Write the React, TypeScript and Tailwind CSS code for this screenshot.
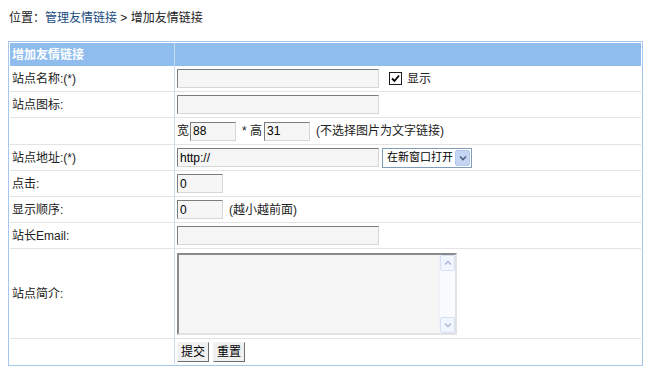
const font = { fontFamily: '"Liberation Sans", "Noto Sans CJK SC", sans-serif' };

function TextBox({ w, value = "" }: { w: string; value?: string }) {
  return (
    <div
      className={`${w} flex h-[19px] shrink-0 items-center border border-t-[#7c7c7c] border-l-[#7c7c7c] border-r-[#d6d6d6] border-b-[#d6d6d6] bg-[#f6f6f6] px-[2px] text-[12px] text-black`}
    >
      {value}
    </div>
  );
}

function Row({
  label,
  h = "h-[26px]",
  children,
}: {
  label: string;
  h?: string;
  children?: React.ReactNode;
}) {
  return (
    <>
      <div className={`${h} flex items-center border-b border-r border-b-[#e4e4e4] border-r-[#c9dcf2] pl-[2px]`}>
        {label}
      </div>
      <div className={`${h} flex items-center gap-[4px] whitespace-nowrap border-b border-[#e4e4e4] pl-[2px]`}>
        {children}
      </div>
    </>
  );
}

const btn =
  "flex h-[20px] items-center border border-t-[#f4f4f4] border-l-[#f4f4f4] border-r-[#6f6f6f] border-b-[#6f6f6f] bg-[#f0f0f0] px-[3px] text-black";

export default function App() {
  return (
    <div className="h-[380px] w-[650px] bg-white text-[12px] text-[#222]" style={font}>
      <div className="pl-[9px] pt-[10px] leading-[16px]">
        位置：<span className="text-[#1a4c80]">管理友情链接</span> &gt; 增加友情链接
      </div>

      <div className="ml-[8px] mt-[15px] w-[635px] border border-[#a6c6ec] p-px">
        <div className="grid grid-cols-[165px_1fr]">
          <div className="flex h-[23px] items-center border-r border-[#c9dcf2] bg-[#8ebdee] pl-[2px] font-bold text-white">
            增加友情链接
          </div>
          <div className="h-[23px] bg-[#8ebdee]" />

          <Row label="站点名称:(*)">
            <TextBox w="w-[202px]" />
            <div className="ml-[6px] flex h-[13px] w-[13px] items-center justify-center border border-[#1c1c1c] bg-white">
              <svg width="9" height="9" viewBox="0 0 9 9">
                <path d="M1 4.5 L3.5 7 L8 1.5" fill="none" stroke="#000" strokeWidth="1.8" />
              </svg>
            </div>
            <span className="ml-[1px]">显示</span>
          </Row>

          <Row label="站点图标:">
            <TextBox w="w-[202px]" />
          </Row>

          <Row label="" h="h-[27px]">
            <span className="mr-[-3px]">宽</span>
            <TextBox w="w-[46px]" value="88" />
            <span className="ml-[2px] mr-[-2px]">* 高</span>
            <TextBox w="w-[46px]" value="31" />
            <span className="ml-[2px]">(不选择图片为文字链接)</span>
          </Row>

          <Row label="站点地址:(*)">
            <TextBox w="w-[202px]" value="http://" />
            <div className="ml-[-1px] flex h-[20px] w-[90px] shrink-0 items-center justify-between border border-[#7f9db9] bg-white pl-[4px] pr-px">
              <span className="whitespace-nowrap text-[11px] text-black">在新窗口打开</span>
              <div className="flex h-[16px] w-[15px] shrink-0 items-center justify-center rounded-[2px] border border-[#b3c8ea] bg-[#c5d6f5]">
                <svg width="8" height="6" viewBox="0 0 8 6">
                  <path d="M1 1.5 L4 4.5 L7 1.5" fill="none" stroke="#4d6185" strokeWidth="1.6" />
                </svg>
              </div>
            </div>
          </Row>

          <Row label="点击:">
            <TextBox w="w-[46px]" value="0" />
          </Row>

          <Row label="显示顺序:">
            <TextBox w="w-[46px]" value="0" />
            <span className="ml-[2px]">(越小越前面)</span>
          </Row>

          <Row label="站长Email:">
            <TextBox w="w-[202px]" />
          </Row>

          <Row label="站点简介:" h="h-[90px]">
            <div className="flex h-[82px] w-[280px] border-2 border-t-[#8a8a8a] border-l-[#8a8a8a] border-r-[#e2e2e2] border-b-[#e2e2e2] bg-[#f6f6f6]">
              <div className="flex-1" />
              <div className="flex w-[16px] flex-col justify-between border-l border-[#eef2fb] bg-[#fafbfe]">
                <div className="flex h-[16px] items-center justify-center rounded-[2px] border border-[#d6e0f4] bg-[#f1f5fd]">
                  <svg width="8" height="6" viewBox="0 0 8 6">
                    <path d="M1 4.5 L4 1.5 L7 4.5" fill="none" stroke="#a9b9d9" strokeWidth="1.5" />
                  </svg>
                </div>
                <div className="flex h-[16px] items-center justify-center rounded-[2px] border border-[#d6e0f4] bg-[#f1f5fd]">
                  <svg width="8" height="6" viewBox="0 0 8 6">
                    <path d="M1 1.5 L4 4.5 L7 1.5" fill="none" stroke="#a9b9d9" strokeWidth="1.5" />
                  </svg>
                </div>
              </div>
            </div>
          </Row>

          <div className="h-[25px] border-r border-[#c9dcf2]" />
          <div className="flex h-[25px] items-center gap-[4px] pl-[2px]">
            <button className={btn}>提交</button>
            <button className={btn}>重置</button>
          </div>
        </div>
      </div>
    </div>
  );
}
